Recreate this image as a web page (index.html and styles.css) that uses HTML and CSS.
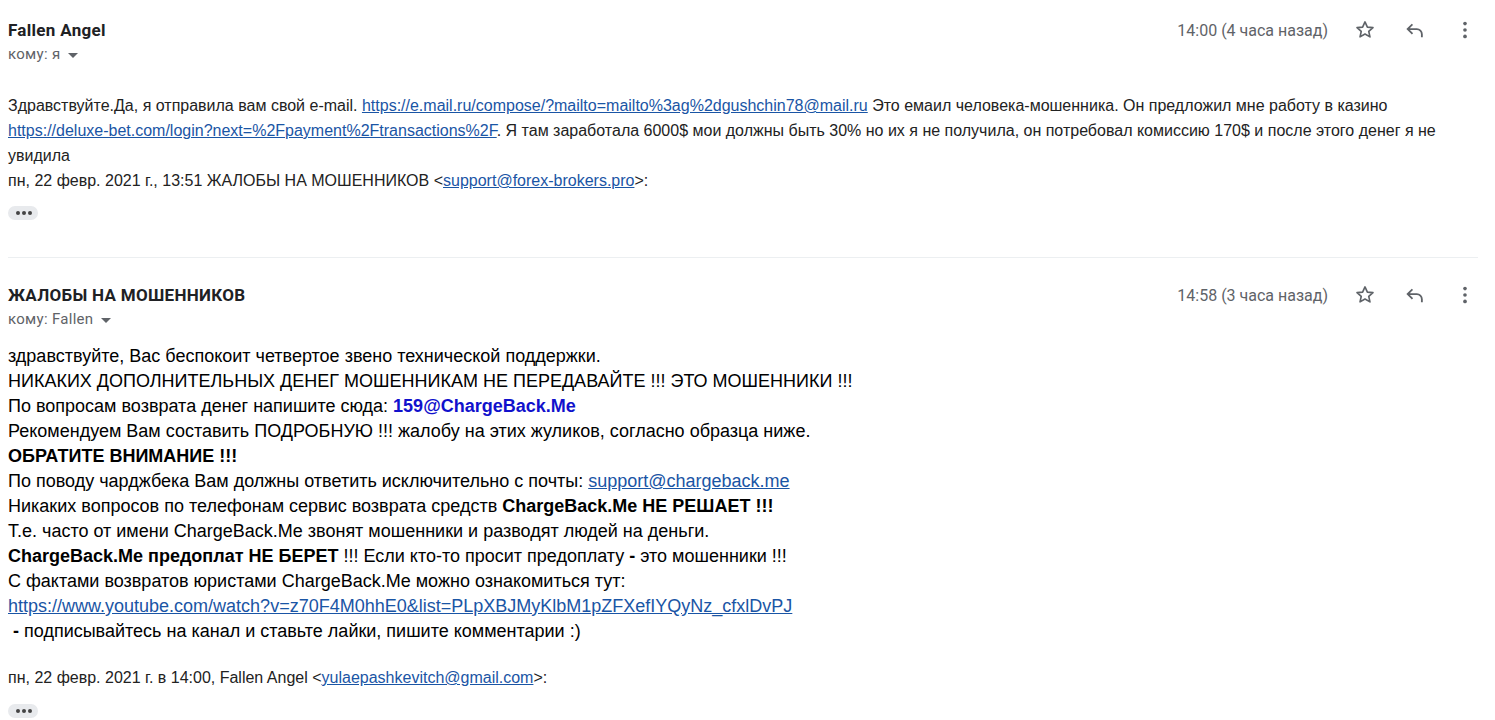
FILE: index.html
```html
<!DOCTYPE html>
<html lang="ru">
<head>
<meta charset="utf-8">
<link rel="stylesheet" href="styles.css">
</head>
<body>
<div class="thread">
  <div class="msg msg-first">
    <div class="head">
      <div class="who">
        <div class="name">Fallen Angel</div>
        <div class="to">кому: я <span class="caret"></span></div>
      </div>
      <div class="meta">
        <span class="time">14:00 (4 часа назад)</span>
        <span class="icon"><svg width="22" height="22" viewBox="0 0 24 24"><path fill="none" stroke="#5f6368" stroke-width="1.8" stroke-linejoin="round" d="M12 3.2l2.6 5.6 6.1.6-4.6 4.1 1.3 6-5.4-3.1-5.4 3.1 1.3-6-4.6-4.1 6.1-.6z"/></svg></span>
        <span class="icon"><svg width="22" height="22" viewBox="0 0 24 24"><path fill="none" stroke="#5f6368" stroke-width="2" stroke-linecap="square" d="M8.5 6.5L4 11l4.5 4.5M4.5 11H14a5.5 5.5 0 0 1 5.5 5.5V19"/></svg></span>
        <span class="icon"><svg width="22" height="22" viewBox="0 0 24 24"><circle cx="12" cy="5" r="2" fill="#5f6368"/><circle cx="12" cy="12" r="2" fill="#5f6368"/><circle cx="12" cy="19" r="2" fill="#5f6368"/></svg></span>
      </div>
    </div>
    <div class="body small">
      <p>Здравствуйте.Да, я отправила вам свой e-mail. <a href="#">https://e.mail.ru/compose/?mailto=mailto%3ag%2dgushchin78@mail.ru</a> Это емаил человека-мошенника. Он предложил мне работу в казино <a href="#">https://deluxe-bet.com/login?next=%2Fpayment%2Ftransactions%2F</a>. Я там заработала 6000$ мои должны быть 30% но их я не получила, он потребовал комиссию 170$ и после этого денег я не увидила</p>
      <p>пн, 22 февр. 2021 г., 13:51 ЖАЛОБЫ НА МОШЕННИКОВ &lt;<a href="#">support@forex-brokers.pro</a>&gt;:</p>
    </div>
    <div class="more"><span class="dots"></span></div>
  </div>
  <div class="msg msg-second">
    <div class="head">
      <div class="who">
        <div class="name">ЖАЛОБЫ НА МОШЕННИКОВ</div>
        <div class="to">кому: Fallen <span class="caret"></span></div>
      </div>
      <div class="meta">
        <span class="time">14:58 (3 часа назад)</span>
        <span class="icon"><svg width="22" height="22" viewBox="0 0 24 24"><path fill="none" stroke="#5f6368" stroke-width="1.8" stroke-linejoin="round" d="M12 3.2l2.6 5.6 6.1.6-4.6 4.1 1.3 6-5.4-3.1-5.4 3.1 1.3-6-4.6-4.1 6.1-.6z"/></svg></span>
        <span class="icon"><svg width="22" height="22" viewBox="0 0 24 24"><path fill="none" stroke="#5f6368" stroke-width="2" stroke-linecap="square" d="M8.5 6.5L4 11l4.5 4.5M4.5 11H14a5.5 5.5 0 0 1 5.5 5.5V19"/></svg></span>
        <span class="icon"><svg width="22" height="22" viewBox="0 0 24 24"><circle cx="12" cy="5" r="2" fill="#5f6368"/><circle cx="12" cy="12" r="2" fill="#5f6368"/><circle cx="12" cy="19" r="2" fill="#5f6368"/></svg></span>
      </div>
    </div>
    <div class="body large">
      <div>здравствуйте, Вас беспокоит четвертое звено технической поддержки.</div>
      <div>НИКАКИХ ДОПОЛНИТЕЛЬНЫХ ДЕНЕГ МОШЕННИКАМ НЕ ПЕРЕДАВАЙТЕ !!! ЭТО МОШЕННИКИ !!!</div>
      <div>По вопросам возврата денег напишите сюда: <b class="blue">159@ChargeBack.Me</b></div>
      <div>Рекомендуем Вам составить ПОДРОБНУЮ !!! жалобу на этих жуликов, согласно образца ниже.</div>
      <div><b>ОБРАТИТЕ ВНИМАНИЕ !!!</b></div>
      <div>По поводу чарджбека Вам должны ответить исключительно с почты: <a href="#">support@chargeback.me</a></div>
      <div>Никаких вопросов по телефонам сервис возврата средств <b>ChargeBack.Me НЕ РЕШАЕТ !!!</b></div>
      <div>Т.е. часто от имени ChargeBack.Me звонят мошенники и разводят людей на деньги.</div>
      <div><b>ChargeBack.Me предоплат НЕ БЕРЕТ</b> !!! Если кто-то просит предоплату <b>-</b> это мошенники !!!</div>
      <div>С фактами возвратов юристами ChargeBack.Me можно ознакомиться тут:</div>
      <div><a href="#">https://www.youtube.com/watch?v=z70F4M0hhE0&amp;list=PLpXBJMyKlbM1pZFXefIYQyNz_cfxlDvPJ</a></div>
      <div>&nbsp;<b>-</b> подписывайтесь на канал и ставьте лайки, пишите комментарии :)</div>
    </div>
    <div class="quote-head">пн, 22 февр. 2021 г. в 14:00, Fallen Angel &lt;<a href="#">yulaepashkevitch@gmail.com</a>&gt;:</div>
    <div class="more"><span class="dots"></span></div>
  </div>
</div>
</body>
</html>
```
FILE: styles.css
```css
* { box-sizing: border-box; }
html, body { margin: 0; padding: 0; background: #fff; overflow: hidden; }
body { font-family: Roboto, "Liberation Sans", Arial, sans-serif; color: #222; }
.thread { width: 1478px; padding-left: 8px; }
.msg-first { padding-top: 18px; height: 258px; border-bottom: 1px solid #eceff1; }
.msg-second { padding-top: 25px; }
.head { display: flex; justify-content: space-between; align-items: flex-start; margin-right: -12px; }
.name { font-size: 17px; font-weight: 700; color: #202124; line-height: 24px; letter-spacing: 0.3px; }
.to { font-size: 15px; color: #5f6368; line-height: 22px; margin-top: 1px; letter-spacing: 0.3px; }
.caret { display: inline-block; width: 0; height: 0; border-left: 5px solid transparent; border-right: 5px solid transparent; border-top: 5px solid #5f6368; vertical-align: middle; margin-left: 4px; }
.meta { display: flex; align-items: center; height: 24px; }
.time { font-size: 16px; color: #5f6368; margin-right: 12px; }
.icon { width: 50px; display: flex; justify-content: center; align-items: center; }
.icon svg { display: block; }
.body { font-family: "Liberation Sans", Arial, sans-serif; }
.small { font-size: 16px; line-height: 25px; margin-top: 28px; color: #222; }
.small p { margin: 0; }
a { color: #1a55a5; text-decoration: underline; white-space: nowrap; }
.more { margin-top: 13px; line-height: 14px; }
.dots { display: inline-block; width: 30px; height: 14px; border-radius: 7px; background: #e8eaed; position: relative; vertical-align: top; }
.dots::before { content: ""; position: absolute; left: 8px; top: 5px; width: 4px; height: 4px; border-radius: 50%; background: #444; box-shadow: 6px 0 0 #444, 12px 0 0 #444; }
.large { font-size: 18px; line-height: 25px; margin-top: 14px; color: #000; }
.blue { color: #1111cc; }
.quote-head { font-family: "Liberation Sans", Arial, sans-serif; font-size: 16px; color: #222; margin-top: 21px; line-height: 25px; }
.msg-second .more { margin-top: 14px; }
```
